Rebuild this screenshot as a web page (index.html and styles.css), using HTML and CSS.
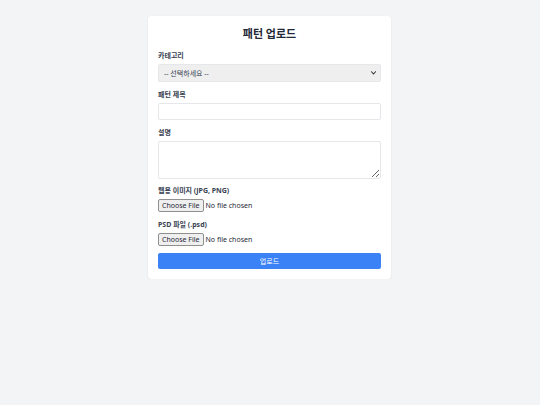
FILE: index.html
```html
<!DOCTYPE html>
<html lang="ko">
<head>
<meta charset="utf-8">
<title>패턴 업로드</title>
<link rel="stylesheet" href="styles.css">
</head>
<body>
<div class="card">
  <h1 class="title">패턴 업로드</h1>
  <form class="form">
    <div class="field">
      <label class="label">카테고리</label>
      <div class="select-wrap">
        <select class="select"><option>-- 선택하세요 --</option></select>
        <svg class="chevron" width="5" height="4" viewBox="0 0 10 8" aria-hidden="true"><path d="M1 1.5 L5 6 L9 1.5" fill="none" stroke="#333" stroke-width="2.2" stroke-linecap="round" stroke-linejoin="round"/></svg>
      </div>
    </div>
    <div class="field">
      <label class="label">패턴 제목</label>
      <input class="input" type="text">
    </div>
    <div class="field">
      <label class="label">설명</label>
      <textarea class="textarea"></textarea>
    </div>
    <div class="field">
      <label class="label">웹용 이미지 (JPG, PNG)</label>
      <input class="file" type="file">
    </div>
    <div class="field">
      <label class="label">PSD 파일 (.psd)</label>
      <input class="file" type="file">
    </div>
    <button class="submit" type="button">업로드</button>
  </form>
</div>
</body>
</html>
```

FILE: styles.css
```css
* { box-sizing: border-box; }
html, body { margin: 0; padding: 0; }
body {
  background: #f3f4f6;
  font-family: "Noto Sans", "Noto Sans CJK KR", sans-serif;
  color: #1f2937;
  padding-top: 16px;
}
.card {
  width: 243px;
  margin: 0 auto 0 148px;
  background: #fff;
  border-radius: 3px;
  box-shadow: 0 1px 2px rgba(0,0,0,0.08), 0 0 1px rgba(0,0,0,0.05);
  padding: 9px 10px 10px;
}
.title {
  margin: 0 0 8px;
  font-size: 11px;
  line-height: 18px;
  font-weight: 700;
  text-align: center;
  color: #1f2937;
}
.form { display: flex; flex-direction: column; gap: 7.5px; }
.field { display: flex; flex-direction: column; }
.label {
  font-size: 7px;
  line-height: 10px;
  font-weight: 700;
  color: #374151;
  margin-bottom: 3px;
}
.select-wrap { position: relative; }
.select, .input, .textarea {
  width: 100%;
  border: 1px solid #e5e7eb;
  border-radius: 2px;
  font-family: inherit;
  font-size: 7px;
  margin: 0;
}
.select {
  display: block;
  height: 18px;
  padding: 0 5px;
  background: #efefef;
  color: #374151;
  appearance: none;
  -webkit-appearance: none;
}
.chevron {
  position: absolute;
  right: 5px;
  top: 7px;
  pointer-events: none;
}
.input { height: 17.5px; padding: 0 4px; }
.textarea { height: 38px; padding: 4px; resize: vertical; display: block; }
.file {
  font-family: "Noto Sans", sans-serif;
  font-size: 7px;
  color: #1f2937;
  height: 13px;
  margin: 0;
}
.file::file-selector-button {
  font-family: "Noto Sans", sans-serif;
  font-size: 7px;
  height: 13px;
  padding: 0 3px;
  margin-right: 2px;
  border: 1px solid #8f8f8f;
  border-radius: 2px;
  background: #efefef;
  color: #1f2937;
}
.submit {
  height: 16px;
  border: 0;
  border-radius: 2px;
  background: #3b82f6;
  color: #fff;
  font-family: inherit;
  font-size: 7px;
  cursor: pointer;
}
```
